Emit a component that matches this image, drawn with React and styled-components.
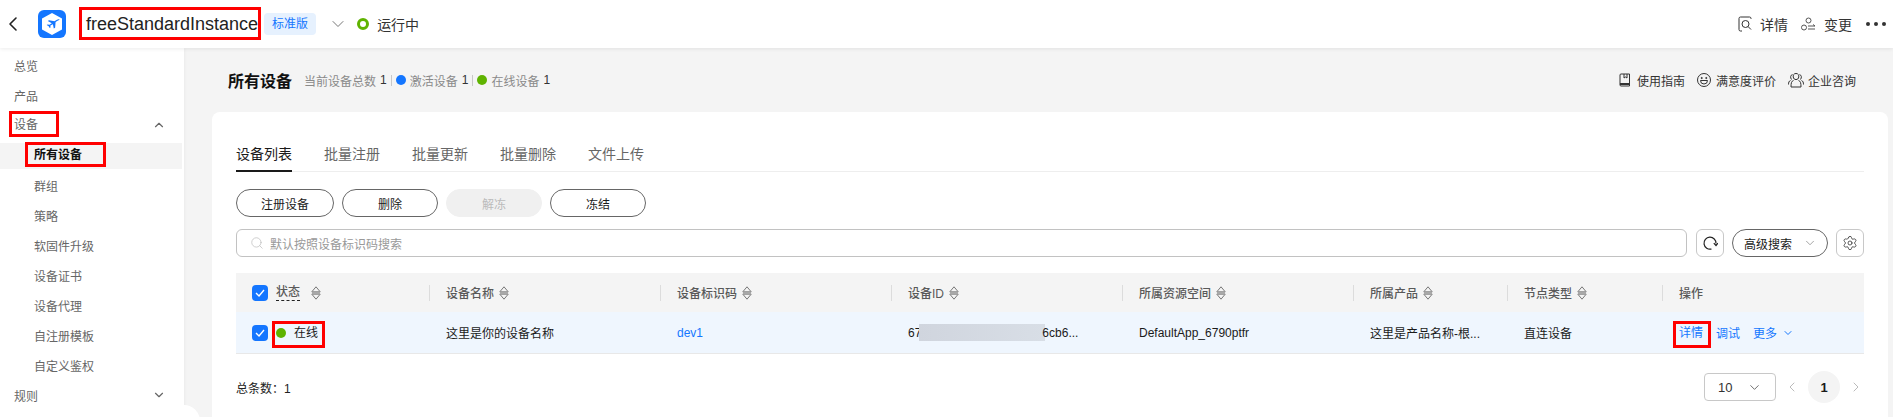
import React from 'react';
import styled, { createGlobalStyle } from 'styled-components';
import { ChevronLeft, ChevronDown, ChevronUp, ChevronRight, Search, Settings } from 'lucide-react';

const GlobalStyle = createGlobalStyle`
  html, body { margin: 0; padding: 0; height: 100%; overflow: hidden; background: #f4f4f4; }
  body { font-family: "Liberation Sans", "Noto Sans CJK SC", sans-serif; font-size: 12px; color: #1a1a1a; }
  * { box-sizing: border-box; }
`;

const Page = styled.div`
  display: flex;
  flex-direction: column;
  height: 417px;
  overflow: hidden;
`;

const TopBar = styled.header`
  position: relative;
  z-index: 2;
  flex: 0 0 48px;
  display: flex;
  align-items: center;
  justify-content: space-between;
  padding: 0 7px 0 1px;
  background: #fff;
  box-shadow: 0 1px 4px rgba(0, 0, 0, 0.08);
`;

const TopLeft = styled.div`
  display: flex;
  align-items: center;
`;

const TopRight = styled.div`
  display: flex;
  align-items: center;
  font-size: 14px;
  color: #333;
`;

const TopAction = styled.span`
  display: flex;
  align-items: center;
  gap: 8px;
  margin-right: 13px;
`;

const Dots = styled.span`
  display: flex;
  gap: 4px;
  margin-left: 1px;
  i { width: 4px; height: 4px; background: #333; border-radius: 50%; display: block; }
`;

// red annotation frame drawn over the marked text
const Marked = styled.span`
  position: relative;
  display: inline-flex;
  align-items: center;
  line-height: 16px;
  &::after {
    content: '';
    position: absolute;
    inset: ${({ $inset }) => $inset};
    border: 3px solid #f00;
    pointer-events: none;
  }
`;

const Title = styled(Marked)`
  font-size: 18px;
  line-height: 24px;
  margin-left: 20px;
  color: #222;
`;

const VersionTag = styled.span`
  margin-left: 6px;
  width: 52px;
  height: 22px;
  line-height: 22px;
  text-align: center;
  background: #e6f1fe;
  color: #1476ff;
  border-radius: 4px;
`;

const StatusRing = styled.span`
  width: 12px;
  height: 12px;
  border-radius: 50%;
  border: 3px solid #5fb300;
  margin: 0 8px 0 9px;
`;

const StatusText = styled.span`
  font-size: 14px;
  color: #333;
`;

const Body = styled.div`
  flex: 1;
  display: flex;
  min-height: 0;
`;

const Sidebar = styled.nav`
  position: relative;
  flex: 0 0 184px;
  padding-top: 5px;
  background: #fff;
  box-shadow: 1px 0 3px rgba(0, 0, 0, 0.04);
`;

const NavRow = styled.div`
  display: flex;
  align-items: center;
  justify-content: space-between;
  height: 26px;
  margin: 0 2px 4px 0;
  padding: 0 16px 2px ${({ $sub }) => ($sub ? '34px' : '14px')};
  color: ${({ $active }) => ($active ? '#111' : '#666')};
  font-weight: ${({ $active }) => ($active ? 700 : 400)};
  background: ${({ $active }) => ($active ? '#f4f4f4' : 'transparent')};
  svg { color: #666; }
`;

const CollapseBump = styled.span`
  position: absolute;
  right: -16px;
  top: 357px;
  width: 32px;
  height: 32px;
  border-radius: 50%;
  background: #fff;
`;

const Main = styled.main`
  flex: 1;
  min-width: 0;
  padding: 0 5px 0 28px;
`;

const PageHeader = styled.div`
  height: 64px;
  display: flex;
  align-items: center;
  justify-content: space-between;
  padding: 0 32px 0 16px;
`;

const HeaderLeft = styled.div`
  display: flex;
  align-items: center;
`;

const PageTitle = styled.h1`
  margin: 0 12px 0 0;
  font-size: 16px;
  font-weight: 700;
  color: #111;
`;

const Stat = styled.span`
  color: #8a8a8a;
  display: flex;
  align-items: center;
  b { font-weight: 400; color: #333; margin-left: 4px; }
`;

const StatDivider = styled.span`
  width: 1px;
  height: 11px;
  background: #c8c8c8;
  margin: 0 4px;
`;

const Dot = styled.span`
  width: 10px;
  height: 10px;
  border-radius: 50%;
  background: ${({ $color }) => $color};
  margin-right: 4px;
`;

const HeaderLinks = styled.div`
  display: flex;
  align-items: center;
  gap: 12px;
  color: #333;
`;

const HeaderLink = styled.span`
  display: flex;
  align-items: center;
  gap: ${({ $gap }) => $gap}px;
`;

const Card = styled.section`
  height: 320px;
  padding: 30px 24px 0;
  background: #fff;
  border-radius: 8px 8px 0 0;
`;

const Tabs = styled.div`
  display: flex;
  gap: 32px;
  height: 30px;
  border-bottom: 1px solid #eee;
`;

const Tab = styled.span`
  height: 30px;
  line-height: 24px;
  font-size: 14px;
  color: ${({ $active }) => ($active ? '#1a1a1a' : '#666')};
  border-bottom: 2px solid ${({ $active }) => ($active ? '#1a1a1a' : 'transparent')};
`;

const ButtonRow = styled.div`
  display: flex;
  gap: 8px;
  margin-top: 17px;
`;

const PillButton = styled.button`
  width: ${({ $width }) => $width}px;
  height: 28px;
  padding: 0;
  font: inherit;
  color: ${({ disabled }) => (disabled ? '#bbb' : '#1a1a1a')};
  background: ${({ disabled }) => (disabled ? '#f0f0f0' : '#fff')};
  border: 1px solid ${({ disabled }) => (disabled ? '#f0f0f0' : '#666')};
  border-radius: 14px;
`;

const SearchRow = styled.div`
  display: flex;
  align-items: center;
  gap: 8px;
  margin-top: 12px;
`;

const SearchBox = styled.div`
  flex: 1;
  height: 28px;
  display: flex;
  align-items: center;
  gap: 6px;
  margin-right: 1px;
  padding: 0 13px;
  border: 1px solid #c2c2c2;
  border-radius: 6px;
  color: #999;
  svg { color: #c0c0c0; }
`;

const IconButton = styled.span`
  flex: 0 0 28px;
  height: 28px;
  display: flex;
  align-items: center;
  justify-content: center;
  border: 1px solid #c8c8c8;
  border-radius: 6px;
  color: #333;
`;

const AdvancedSearch = styled.span`
  flex: 0 0 96px;
  height: 28px;
  display: flex;
  align-items: center;
  justify-content: space-between;
  padding: 0 10px 0 11px;
  border: 1px solid #666;
  border-radius: 14px;
  svg { color: #888; }
`;

const Table = styled.div`
  margin-top: 16px;
`;

const TableGrid = styled.div`
  display: grid;
  grid-template-columns: 193px 231px 231px 231px 231px 154px 155px 202px;
  align-items: center;
`;

const HeadRow = styled(TableGrid)`
  height: 39px;
  background: #f4f4f4;
  color: #595959;
  font-weight: 500;
`;

const DataRow = styled(TableGrid)`
  height: 42px;
  background: #eff6fe;
  border-bottom: 1px solid #e8e8e8;
  color: #1a1a1a;
`;

const HeadCell = styled.div`
  display: flex;
  align-items: center;
  height: 16px;
  padding-left: 16px;
  border-left: 1px solid #dcdcdc;
  gap: 5px;
`;

const StatusHead = styled.div`
  display: flex;
  align-items: center;
  padding-left: 16px;
`;

const Cell = styled.div`
  display: flex;
  align-items: center;
  padding-left: ${({ $first }) => ($first ? 16 : 17)}px;
  white-space: nowrap;
  overflow: hidden;
`;

const StatusCell = styled(Cell)`
  overflow: visible;
`;

const Check = styled.span`
  flex: 0 0 16px;
  width: 16px;
  height: 16px;
  display: flex;
  align-items: center;
  justify-content: center;
  background: #1476ff;
  border-radius: 4px;
  margin-right: 8px;
`;

const TipLabel = styled.span`
  border-bottom: 1px dashed #222;
  line-height: 16px;
  margin-right: 11px;
`;

const OnlineDot = styled.span`
  width: 10px;
  height: 10px;
  border-radius: 50%;
  background: #5fb300;
  margin-right: 8px;
`;

const LinkText = styled.span`
  color: #1476ff;
`;

const IdMask = styled.span`
  display: inline-block;
  width: 126px;
  height: 17px;
  margin: 0 -3px 0 -2px;
  background: linear-gradient(90deg, #d0d5de, #d8dee6);
`;

const ActionLinks = styled.div`
  display: flex;
  align-items: center;
  color: #1476ff;
  padding-left: 17px;
  gap: 13px;
`;

const MoreLink = styled.span`
  display: flex;
  align-items: center;
  gap: 5px;
`;

const Footer = styled.div`
  display: flex;
  align-items: center;
  justify-content: space-between;
  margin-top: 17px;
`;

const Total = styled.span`
  color: #222;
`;

const Pager = styled.div`
  display: flex;
  align-items: center;
  color: #bbb;
`;

const PageSize = styled.span`
  width: 72px;
  height: 28px;
  display: flex;
  align-items: center;
  justify-content: space-between;
  padding: 0 13px;
  margin-right: 8px;
  border: 1px solid #c8c8c8;
  border-radius: 4px;
  color: #333;
  font-size: 13px;
  svg { color: #666; }
`;

const PageNumber = styled.span`
  width: 32px;
  height: 32px;
  display: flex;
  align-items: center;
  justify-content: center;
  margin: 0 8px;
  border-radius: 50%;
  background: #f4f4f4;
  color: #1a1a1a;
  font-size: 13px;
  font-weight: 700;
`;

function AppLogo() {
  return (
    <svg width="28" height="28" viewBox="0 0 28 28" style={{ marginLeft: 13 }}>
      <rect width="28" height="28" rx="6" fill="#1476ff" />
      <polygon points="14,3 24,8.500 24,19.500 14,25 4,19.500 4,8.500" fill="#fff" />
      <path d="M21.500 9.500c-.8-.4-2 0-3 .6l-2 1.200-5.500-1-1.200.7 4 2.200-2.300 1.600-2-.4-.8.600 2 1.200 1 1.700.8-.5-.1-1.800 2.500-1.300.9 4.300 1.300-.8.500-5.700 2.400-1.500c.9-.6 1.700-.7 1.500-1.100z" fill="#1476ff" />
    </svg>
  );
}

function DetailIcon() {
  return (
    <svg width="14" height="16" viewBox="0 0 14 16" fill="none" stroke="#333" strokeWidth="1">
      <path d="M13 3V2.500A1.500 1.500 0 0 0 11.500 1h-9A1.500 1.500 0 0 0 1 2.500v11A1.500 1.500 0 0 0 2.500 15H4" />
      <circle cx="7.500" cy="8" r="3.500" />
      <path d="M10 10.500l3 3" />
    </svg>
  );
}

function ChangeIcon() {
  return (
    <svg width="15" height="15" viewBox="0 0 15 15" fill="none" stroke="#555" strokeWidth="1">
      <circle cx="7.500" cy="3.500" r="2.500" />
      <circle cx="3" cy="10.500" r="2.500" />
      <path d="M7 9h7l-2-1.500M14 12H7" />
    </svg>
  );
}

function BookIcon() {
  return (
    <svg width="12" height="14" viewBox="0 0 12 14" fill="none" stroke="#333" strokeWidth="1">
      <path d="M2 1h8.500v12H2A1 1 0 0 1 1 12V2a1 1 0 0 1 1-1z" />
      <path d="M1 11h9.500" strokeWidth="2" />
      <path d="M5 1v4l1.500-1L8 5V1" />
    </svg>
  );
}

function SmileIcon() {
  return (
    <svg width="14" height="14" viewBox="0 0 14 14" fill="none" stroke="#333" strokeWidth="1">
      <circle cx="7" cy="7" r="6.500" />
      <circle cx="4.700" cy="5" r=".6" fill="#333" />
      <circle cx="9.300" cy="5" r=".6" fill="#333" />
      <path d="M3.500 7.500h7a3.500 3.500 0 0 1-7 0z" />
    </svg>
  );
}

function PeopleIcon() {
  return (
    <svg width="16" height="15" viewBox="0 0 16 15" fill="none" stroke="#333" strokeWidth="1">
      <path d="M5.500 1.800a3 3 0 0 1 5 0c.6 1.400.3 3-.7 4.200-.6.700-3 .700-3.600 0-1-1.200-1.300-2.800-.7-4.200z" />
      <path d="M5.500 7.500C3.500 8 3 10 3 14h10c0-4-.5-6-2.500-6.500" />
      <path d="M4.500 1.500C2.500 2 2 4.500 3.500 6.500M11.500 1.500c2 .5 2.500 3 1 5M2.500 7.500C1 8 .5 9.500.5 11.500M13.500 7.500c1.500.5 2 2 2 4" />
    </svg>
  );
}

function RefreshIcon() {
  return (
    <svg width="16" height="16" viewBox="0 0 16 16" fill="none" stroke="#222" strokeWidth="1.200">
      <path d="M9.500 14A6 6 0 1 1 14 8.500" />
      <path d="M11.800 8.200l2.200 2.300 1.900-2.300" />
    </svg>
  );
}

function SortIcon() {
  return (
    <svg width="10" height="14" viewBox="0 0 10 14" fill="none" stroke="#777" strokeWidth="1">
      <path d="M5 .8l4.200 5H.8zM5 13.200l4.200-5H.8z" />
      <rect x="1" y="5.500" width="8" height="3" fill="#a8a8a8" stroke="none" />
    </svg>
  );
}

function CheckBox() {
  return (
    <Check>
      <svg width="10" height="8" viewBox="0 0 10 8" fill="none" stroke="#fff" strokeWidth="1.400">
        <path d="M1 4l3 3 5-6" />
      </svg>
    </Check>
  );
}

const subNav = ['群组', '策略', '软固件升级', '设备证书', '设备代理', '自注册模板', '自定义鉴权'];
const tabs = ['设备列表', '批量注册', '批量更新', '批量删除', '文件上传'];
const columns = ['设备名称', '设备标识码', '设备ID', '所属资源空间', '所属产品', '节点类型'];

export default function App() {
  return (
    <Page>
      <GlobalStyle />
      <TopBar>
        <TopLeft>
          <ChevronLeft size={24} strokeWidth={1.6} color="#222" />
          <AppLogo />
          <Title $inset="-5px -3px -4px -7px">freeStandardInstance</Title>
          <VersionTag>标准版</VersionTag>
          <ChevronDown size={20} strokeWidth={1.2} color="#777" style={{ marginLeft: 12 }} />
          <StatusRing />
          <StatusText>运行中</StatusText>
        </TopLeft>
        <TopRight>
          <TopAction><DetailIcon />详情</TopAction>
          <TopAction><ChangeIcon />变更</TopAction>
          <Dots><i /><i /><i /></Dots>
        </TopRight>
      </TopBar>
      <Body>
        <Sidebar>
          <NavRow>总览</NavRow>
          <NavRow>产品</NavRow>
          <NavRow><Marked $inset="-6px -21px -4px -5px">设备</Marked><ChevronUp size={14} /></NavRow>
          <NavRow $sub $active><Marked $inset="-5px -24px -4px -9px">所有设备</Marked></NavRow>
          {subNav.map((item) => <NavRow $sub key={item}>{item}</NavRow>)}
          <NavRow>规则<ChevronDown size={14} /></NavRow>
          <CollapseBump />
        </Sidebar>
        <Main>
          <PageHeader>
            <HeaderLeft>
              <PageTitle>所有设备</PageTitle>
              <Stat>当前设备总数<b>1</b></Stat>
              <StatDivider />
              <Stat><Dot $color="#1476ff" />激活设备<b>1</b></Stat>
              <StatDivider />
              <Stat><Dot $color="#5fb300" />在线设备<b>1</b></Stat>
            </HeaderLeft>
            <HeaderLinks>
              <HeaderLink $gap={6}><BookIcon />使用指南</HeaderLink>
              <HeaderLink $gap={5}><SmileIcon />满意度评价</HeaderLink>
              <HeaderLink $gap={4}><PeopleIcon />企业咨询</HeaderLink>
            </HeaderLinks>
          </PageHeader>
          <Card>
            <Tabs>
              {tabs.map((tab, i) => <Tab key={tab} $active={i === 0}>{tab}</Tab>)}
            </Tabs>
            <ButtonRow>
              <PillButton $width={98}>注册设备</PillButton>
              <PillButton $width={96}>删除</PillButton>
              <PillButton $width={96} disabled>解冻</PillButton>
              <PillButton $width={96}>冻结</PillButton>
            </ButtonRow>
            <SearchRow>
              <SearchBox><Search size={14} strokeWidth={1.3} />默认按照设备标识码搜索</SearchBox>
              <IconButton><RefreshIcon /></IconButton>
              <AdvancedSearch>高级搜索<ChevronDown size={14} strokeWidth={1.3} /></AdvancedSearch>
              <IconButton><Settings size={16} strokeWidth={1.2} /></IconButton>
            </SearchRow>
            <Table>
              <HeadRow>
                <StatusHead>
                  <CheckBox />
                  <TipLabel>状态</TipLabel>
                  <SortIcon />
                </StatusHead>
                {columns.map((col) => <HeadCell key={col}>{col}<SortIcon /></HeadCell>)}
                <HeadCell>操作</HeadCell>
              </HeadRow>
              <DataRow>
                <StatusCell $first>
                  <CheckBox />
                  <Marked $inset="-4px -7px -7px -4px"><OnlineDot />在线</Marked>
                </StatusCell>
                <Cell>这里是你的设备名称</Cell>
                <Cell><LinkText>dev1</LinkText></Cell>
                <Cell>67<IdMask />6cb6...</Cell>
                <Cell>DefaultApp_6790ptfr</Cell>
                <Cell>这里是产品名称-根...</Cell>
                <Cell>直连设备</Cell>
                <ActionLinks>
                  <Marked $inset="-4px -8px -7px -6px">详情</Marked>
                  <span>调试</span>
                  <MoreLink>更多<ChevronDown size={12} /></MoreLink>
                </ActionLinks>
              </DataRow>
            </Table>
            <Footer>
              <Total>总条数：1</Total>
              <Pager>
                <PageSize>10<ChevronDown size={15} strokeWidth={1.5} /></PageSize>
                <ChevronLeft size={16} strokeWidth={1.5} />
                <PageNumber>1</PageNumber>
                <ChevronRight size={16} strokeWidth={1.5} />
              </Pager>
            </Footer>
          </Card>
        </Main>
      </Body>
    </Page>
  );
}
